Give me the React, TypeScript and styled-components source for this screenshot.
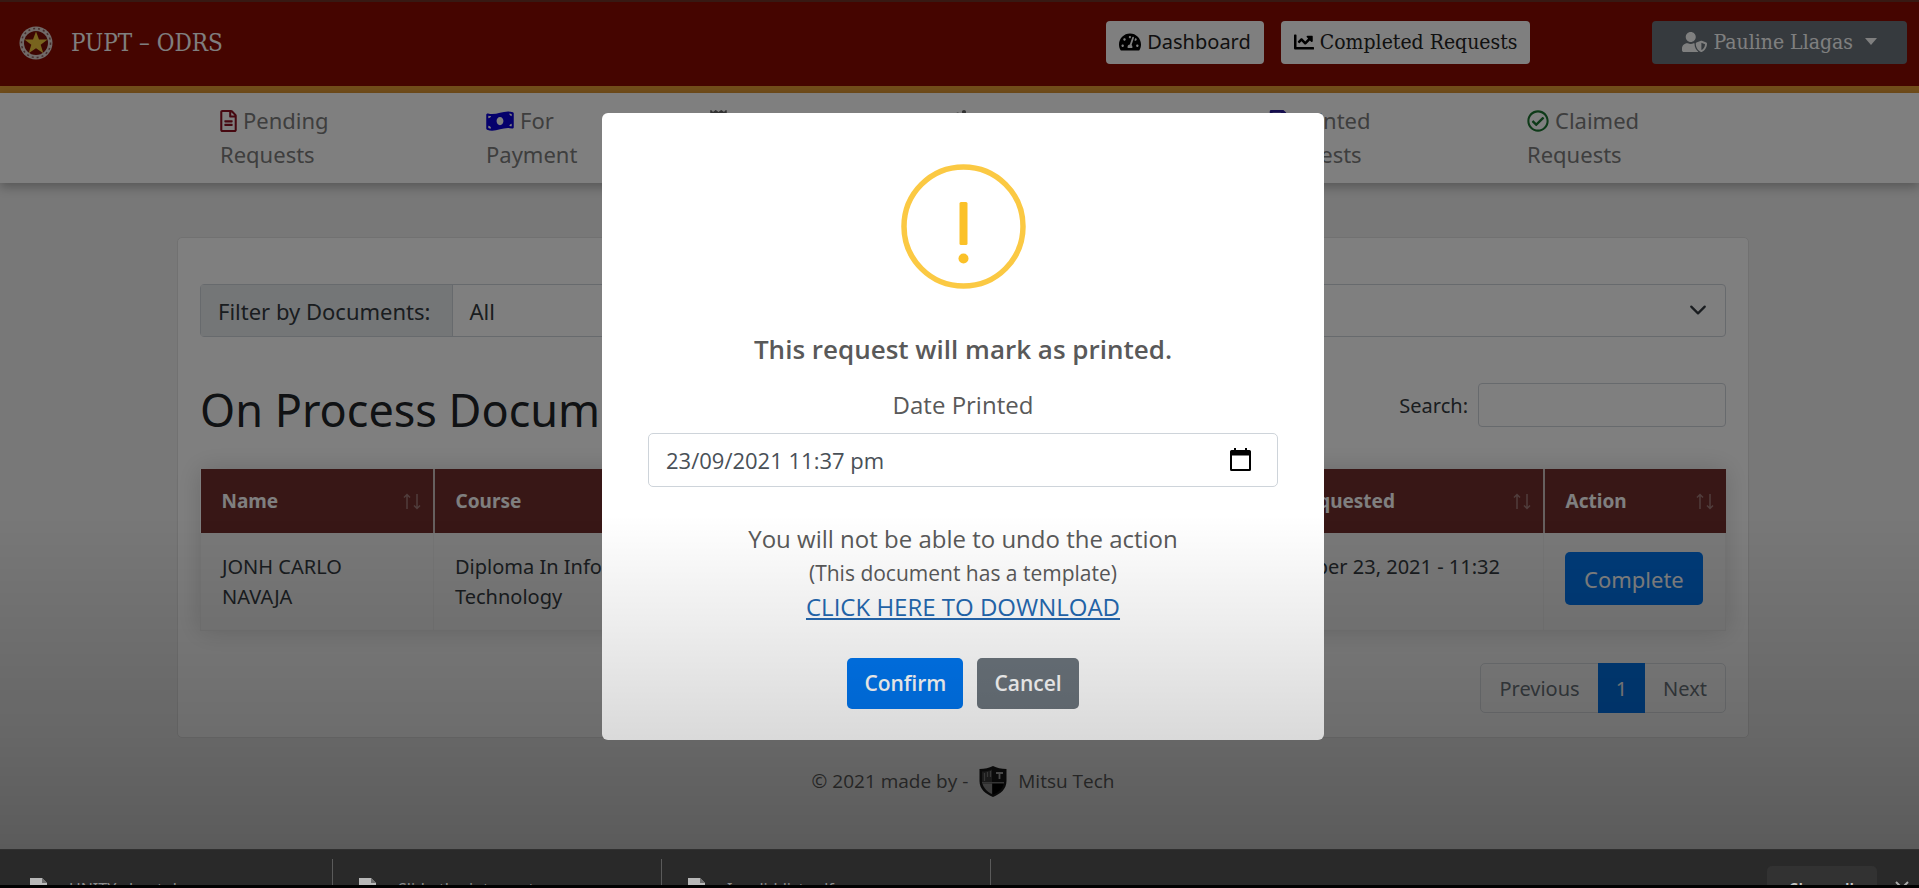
import React from 'react';
import styled, { createGlobalStyle, css } from 'styled-components';
import {
  FaTachometerAlt,
  FaChartLine,
  FaUserShield,
  FaRegFileAlt,
  FaMoneyBillWave,
  FaRegCheckCircle,
  FaPrint,
  FaReceipt,
  FaSpinner,
} from 'react-icons/fa';

const sans = '"Noto Sans", "Open Sans", sans-serif';
const dialogSans = '"Open Sans", "Noto Sans", sans-serif';
const serif = '"DejaVu Serif Condensed", "DejaVu Serif", serif';
const primary = '#0076f0';
const secondary = '#6c757d';

const GlobalStyle = createGlobalStyle`
  *, *::before, *::after { box-sizing: border-box; }
  body {
    margin: 0;
    background: #f0f0f0;
    color: #343a40;
    font-family: ${sans};
    font-size: 20px;
  }
  button, input, select { font-family: inherit; }
`;

const Page = styled.div`
  min-height: 100vh;
  padding-bottom: 39px;
`;

/* ---------- header ---------- */

const Header = styled.header`
  display: flex;
  align-items: center;
  padding: 19px 12px 22px 19px;
  background: #8a0a00;
  border-top: 2px solid #6e3226;
  border-bottom: 7px solid #e39c36;
`;

const Brand = styled.a`
  display: flex;
  align-items: center;
  gap: 18px;
  margin-right: auto;
  color: #fff;
  font-family: ${serif};
  font-size: 24px;
  line-height: 28px;
  text-decoration: none;
`;

const HeaderButton = styled.button<{ $icon: number; $serif?: boolean; $dark?: boolean }>`
  display: flex;
  align-items: center;
  justify-content: center;
  gap: 6px;
  height: 43px;
  padding: 0 13px 2px;
  border: 0;
  border-radius: 4px;
  background: #fff;
  color: #222;
  font-size: 20px;
  line-height: 28px;

  svg {
    height: 20px;
    width: ${(p) => p.$icon}px;
    color: ${(p) => (p.$dark ? '#fff' : '#000')};
  }

  ${(p) =>
    p.$serif &&
    css`
      font-family: ${serif};
      font-size: 21px;
    `}

  ${(p) =>
    p.$dark &&
    css`
      padding: 0 30px 2px;
      background: ${secondary};
      color: #fff;
    `}
`;

const HeaderActions = styled.div`
  display: flex;
  gap: 17px;
  margin-right: 122px;
`;

const Caret = styled.span`
  margin-left: 6px;
  border: 6px solid transparent;
  border-top: 7px solid currentColor;
  border-bottom: 0;
`;

/* ---------- status navigation ---------- */

const StatusNav = styled.nav`
  display: grid;
  grid-template-columns: 266fr 224fr 243fr 314fr 260fr 392fr;
  padding: 10px 0 12px 220px;
  background: #fff;
  box-shadow: 0 4px 10px rgba(0, 0, 0, 0.28);
`;

const StatusLink = styled.a<{ $tint: string; $icon: number }>`
  color: #7c7c7c;
  font-size: 22px;
  line-height: 34px;
  text-decoration: none;

  svg {
    height: 22px;
    width: ${(p) => p.$icon}px;
    margin-right: 6px;
    vertical-align: -3px;
    color: ${(p) => p.$tint};
  }
`;

/* ---------- main card ---------- */

const Main = styled.main`
  padding: 54px 170px 0 177px;
`;

const Card = styled.section`
  padding: 46px 22px 24px;
  background: #fff;
  border: 1px solid #e2e2e2;
  border-radius: 5px;
`;

const FilterGroup = styled.div`
  display: flex;
  height: 53px;
  border: 1px solid #ced4da;
  border-radius: 4px;
`;

const FilterLabel = styled.label`
  display: flex;
  align-items: center;
  padding: 0 22px 0 17px;
  background: #e9ecef;
  border-right: 1px solid #ced4da;
  font-size: 22px;
`;

const SelectWrap = styled.div`
  position: relative;
  flex: 1;

  svg {
    position: absolute;
    top: 16px;
    right: 18px;
    pointer-events: none;
  }
`;

const Select = styled.select`
  width: 100%;
  height: 100%;
  padding: 0 48px 0 16px;
  appearance: none;
  border: 0;
  background: transparent;
  color: #343a40;
  font-size: 22px;
`;

const CardHead = styled.div`
  display: flex;
  align-items: flex-start;
  justify-content: space-between;
  margin: 46px 0 32px;
`;

const Heading = styled.h1`
  margin: 0;
  color: #212529;
  font-size: 45px;
  font-weight: 400;
  line-height: 54px;
`;

const SearchLabel = styled.label`
  display: flex;
  align-items: center;
  gap: 10px;
`;

const SearchInput = styled.input`
  width: 248px;
  height: 44px;
  padding: 0 12px;
  border: 1px solid #ced4da;
  border-radius: 4px;
  background: #fff;
  font-size: 20px;
`;

const Table = styled.table`
  width: 100%;
  table-layout: fixed;
  border-collapse: collapse;
  box-shadow: 0 0 24px rgba(0, 0, 0, 0.16);
`;

const Col = styled.col<{ $w?: string }>`
  width: ${(p) => p.$w ?? 'auto'};
`;

const Th = styled.th`
  height: 64px;
  padding: 0 12px 0 21px;
  background: #702e2c;
  color: #fff;
  font-size: 19px;
  font-weight: 700;
  text-align: left;

  & + & {
    border-left: 2px solid #cfc0be;
  }
`;

const ThInner = styled.div`
  display: flex;
  align-items: center;
  justify-content: space-between;
`;

const Td = styled.td`
  padding: 19px 21px 18px;
  background: #f2f2f2;
  border: 1px solid #eaeaea;
  border-top: 0;
  line-height: 30px;
  vertical-align: top;
`;

const CompleteButton = styled.button`
  display: block;
  height: 53px;
  padding: 0 19px;
  border: 0;
  border-radius: 5px;
  background: ${primary};
  color: #fff;
  font-size: 22px;
`;

const Pagination = styled.nav`
  display: flex;
  width: fit-content;
  height: 50px;
  margin: 32px 0 0 auto;
  border: 1px solid #dee2e6;
  border-radius: 5px;
`;

const PageButton = styled.button<{ $active?: boolean }>`
  margin: ${(p) => (p.$active ? '-1px 0' : '0')};
  padding: 0 18px;
  border: 0;
  background: ${(p) => (p.$active ? primary : 'transparent')};
  color: ${(p) => (p.$active ? '#fff' : secondary)};
  font-size: 20px;
`;

const Footer = styled.footer`
  display: flex;
  align-items: center;
  justify-content: center;
  gap: 11px;
  padding: 27px 0 27px 7px;
  color: #5c5c5c;
  font-family: ${dialogSans};
  font-size: 19px;
  line-height: 32px;
`;

/* ---------- dialog ---------- */

const Backdrop = styled.div`
  position: fixed;
  inset: 0;
  z-index: 10;
  display: flex;
  align-items: center;
  justify-content: center;
  padding: 0 0 36px 7px;
  background: rgba(0, 0, 0, 0.5);
`;

const Dialog = styled.div`
  display: flex;
  flex-direction: column;
  align-items: center;
  width: 722px;
  max-width: 100%;
  padding: 51px 46px 31px;
  background: #fff;
  border-radius: 6px;
  color: #595959;
  font-family: ${dialogSans};
`;

const DialogTitle = styled.h2`
  margin: 40px 0 18px;
  font-size: 26px;
  font-weight: 600;
  line-height: 40px;
`;

const DialogLabel = styled.label`
  font-size: 24px;
  line-height: 36px;
`;

const DateField = styled.div`
  display: flex;
  align-items: center;
  width: 100%;
  height: 54px;
  margin: 10px 0 34px;
  padding: 0 24px 0 17px;
  border: 1px solid #ced4da;
  border-radius: 5px;
`;

const DateInput = styled.input`
  flex: 1;
  min-width: 0;
  padding: 0;
  border: 0;
  outline: 0;
  background: transparent;
  color: #495057;
  font-size: 22px;
`;

const IconButton = styled.button`
  display: flex;
  padding: 0;
  border: 0;
  background: transparent;
  color: #000;
`;

const DialogText = styled.p<{ $small?: boolean }>`
  margin: 0;
  font-size: ${(p) => (p.$small ? '21px' : '24px')};
  line-height: ${(p) => (p.$small ? '32px' : '36px')};
`;

const DownloadLink = styled.a`
  color: #2468b0;
  text-decoration: underline;
`;

const DialogActions = styled.div`
  display: flex;
  gap: 14px;
  margin-top: 33px;
`;

const DialogButton = styled.button<{ $tone: string }>`
  height: 51px;
  padding: 0 17px;
  border: 0;
  border-radius: 5px;
  background: ${(p) => p.$tone};
  color: #fff;
  font-size: 21px;
  font-weight: 600;
`;

/* ---------- bottom shade and download shelf ---------- */

const Shade = styled.div`
  position: fixed;
  inset: 0;
  z-index: 20;
  pointer-events: none;
  background: linear-gradient(
    rgba(0, 0, 0, 0) 58%,
    rgba(0, 0, 0, 0.145) 83%,
    rgba(0, 0, 0, 0.24) 96%
  );
`;

const Shelf = styled.aside`
  position: fixed;
  inset: auto 0 0;
  z-index: 30;
  display: flex;
  height: 39px;
  padding-left: 4px;
  overflow: hidden;
  background: #292929;
  border-bottom: 3px solid #000;
  border-top: 1px solid #303030;
  color: #8c8c8c;
  font-size: 16px;
  line-height: 22px;
`;

const ShelfItem = styled.div`
  display: flex;
  gap: 22px;
  flex: 0 0 329px;
  height: 60px;
  margin-top: 9px;
  padding: 19px 0 0 26px;
  border-right: 1px solid #5a5a5a;
`;

const ShelfButton = styled.button`
  height: 44px;
  margin: 16px 18px 0 auto;
  padding: 12px 23px;
  border: 0;
  border-radius: 5px;
  background: #323232;
  color: #c4c4c4;
  font-size: 16px;
  font-weight: 600;
  line-height: 22px;
`;

const ShelfClose = styled.button`
  align-self: flex-start;
  margin: 31px 10px 0 0;
  padding: 0;
  border: 0;
  background: transparent;
  color: #aaa;
`;

/* ---------- drawings ---------- */

const Seal = () => (
  <svg width="34" height="34" viewBox="0 0 34 34" aria-hidden="true">
    <circle cx="17" cy="17" r="16.5" fill="#e2d4d0" />
    <circle cx="17" cy="17" r="14.500" fill="none" stroke="#8c5a58" strokeWidth="1.500" strokeDasharray="2 3" />
    <circle cx="17" cy="17" r="12" fill="#7a0c04" />
    <path
      d="M17 5.500l3 8h8.600l-6.900 5.300 2.600 8.400-7.300-5-7.300 5 2.600-8.400L5.400 13.500H14z"
      fill="#f0c83c"
    />
  </svg>
);

const Shield = () => (
  <svg width="28" height="31" viewBox="0 0 28 31" aria-hidden="true">
    <path d="M14 0c4 2 8 3 13.500 3v12c0 8-6 13-13.500 16C6.500 28 .500 23 .500 15V3C6 3 10 2 14 0z" fill="#1a1a1a" />
    <path d="M14 17.500h10.500C24 22.500 19.500 26.500 14 28.500z" fill="#000" />
    <path d="M13 17.500H3.500C4.500 22 8.500 26 13 28z" fill="#9a9a9a" />
    <path d="M3 5.500c4 0 7-.500 10-2v12.500H3z" fill="#444" />
    <path d="M3 16.800h22" stroke="#b0b0b0" strokeWidth="1" />
    <path d="M5.500 7v8M8.500 6v5M11.500 5v6" stroke="#888" strokeWidth="1.200" />
    <path d="M17 7h7M20.500 7v6" stroke="#b0b0b0" strokeWidth="1.800" />
  </svg>
);

const Warning = () => (
  <svg width="125" height="125" viewBox="0 0 125 125" role="img" aria-label="Warning">
    <circle cx="62.500" cy="62.500" r="59.500" fill="none" stroke="#fbc943" strokeWidth="5.500" />
    <rect x="58.500" y="38" width="8" height="43" rx="1.500" fill="#fbc128" />
    <circle cx="62.500" cy="94.500" r="5" fill="#fbc128" />
  </svg>
);

const Chevron = () => (
  <svg width="18" height="18" viewBox="0 0 16 16" aria-hidden="true">
    <path d="M2 5l6 6 6-6" fill="none" stroke="#343a40" strokeWidth="2" strokeLinecap="round" strokeLinejoin="round" />
  </svg>
);

const CalendarIcon = () => (
  <svg width="24" height="24" viewBox="0 0 24 24" aria-hidden="true">
    <path d="M5 0h2v2h9V0h2v2h2.500a1.500 1.500 0 0 1 1.500 1.500v18a1.500 1.500 0 0 1-1.500 1.500h-18A1.500 1.500 0 0 1 1 21.500v-18A1.500 1.500 0 0 1 2.500 2H5zM3 7.500V21h17V7.500z" fill="currentColor" fillRule="evenodd" />
  </svg>
);

const SortIcon = () => (
  <svg width="18" height="17" viewBox="0 0 18 17" fill="none" stroke="#a07a78" strokeWidth="1.500" aria-hidden="true">
    <path d="M4 16V1.500M1 4.500l3-3 3 3M14 1v14.500M11 12.500l3 3 3-3" />
  </svg>
);

const FileIcon = () => (
  <svg width="17" height="20" viewBox="0 0 17 20" aria-hidden="true">
    <path d="M0 0h12l5 5v15H0z" fill="#b8b8b8" />
    <path d="M12 0v5h5z" fill="#6e6e6e" />
  </svg>
);

/* ---------- page ---------- */

const statuses = [
  { icon: FaRegFileAlt, size: 17, tint: '#8c1020', first: 'Pending', second: 'Requests' },
  { icon: FaMoneyBillWave, size: 28, tint: '#0a00d8', first: 'For', second: 'Payment' },
  { icon: FaReceipt, size: 17, tint: '#666', first: 'For', second: 'Clearance' },
  { icon: FaSpinner, size: 22, tint: '#666', first: 'On', second: 'Process' },
  { icon: FaPrint, size: 22, tint: '#2a1a9c', first: 'Printed', second: 'Requests' },
  { icon: FaRegCheckCircle, size: 22, tint: '#1c7430', first: 'Claimed', second: 'Requests' },
];

const columns = ['Name', 'Course', 'Document', 'Date Requested', 'Action'];

const downloads = ['UNITY-sheet.docx', 'Slide-the-intro.pptx', 'Invalid-list.pdf'];

export default function App() {
  return (
    <>
      <GlobalStyle />
      <Page>
        <Header>
          <Brand href="#">
            <Seal />
            PUPT – ODRS
          </Brand>
          <HeaderActions>
            <HeaderButton type="button" $icon={22}>
              <FaTachometerAlt />
              Dashboard
            </HeaderButton>
            <HeaderButton type="button" $icon={20} $serif>
              <FaChartLine />
              Completed Requests
            </HeaderButton>
          </HeaderActions>
          <HeaderButton type="button" $icon={25} $serif $dark>
            <FaUserShield />
            Pauline Llagas
            <Caret />
          </HeaderButton>
        </Header>

        <StatusNav>
          {statuses.map(({ icon: Icon, size, tint, first, second }) => (
            <StatusLink key={first + second} href="#" $tint={tint} $icon={size}>
              <Icon />
              {first}
              <br />
              {second}
            </StatusLink>
          ))}
        </StatusNav>

        <Main>
          <Card>
            <FilterGroup>
              <FilterLabel htmlFor="document-filter">Filter by Documents:</FilterLabel>
              <SelectWrap>
                <Select id="document-filter" defaultValue="All">
                  <option>All</option>
                </Select>
                <Chevron />
              </SelectWrap>
            </FilterGroup>

            <CardHead>
              <Heading>On Process Documents</Heading>
              <SearchLabel>
                Search:
                <SearchInput type="search" />
              </SearchLabel>
            </CardHead>

            <Table>
              <colgroup>
                <Col $w="233px" />
                <Col $w="280px" />
                <Col />
                <Col $w="321px" />
                <Col $w="182px" />
              </colgroup>
              <thead>
                <tr>
                  {columns.map((name) => (
                    <Th key={name} scope="col">
                      <ThInner>
                        {name}
                        <SortIcon />
                      </ThInner>
                    </Th>
                  ))}
                </tr>
              </thead>
              <tbody>
                <tr>
                  <Td>JONH CARLO NAVAJA</Td>
                  <Td>Diploma In Information Technology</Td>
                  <Td>Certificate</Td>
                  <Td>September 23, 2021 - 11:32 PM</Td>
                  <Td>
                    <CompleteButton type="button">Complete</CompleteButton>
                  </Td>
                </tr>
              </tbody>
            </Table>

            <Pagination aria-label="Table pages">
              <PageButton type="button">Previous</PageButton>
              <PageButton type="button" $active>
                1
              </PageButton>
              <PageButton type="button">Next</PageButton>
            </Pagination>
          </Card>
        </Main>

        <Footer>
          <span>© 2021 made by -</span>
          <Shield />
          <span>Mitsu Tech</span>
        </Footer>
      </Page>

      <Backdrop>
        <Dialog role="dialog" aria-modal="true" aria-labelledby="dialog-title">
          <Warning />
          <DialogTitle id="dialog-title">This request will mark as printed.</DialogTitle>
          <DialogLabel htmlFor="date-printed">Date Printed</DialogLabel>
          <DateField>
            <DateInput id="date-printed" type="text" defaultValue="23/09/2021 11:37 pm" />
            <IconButton type="button" aria-label="Pick a date">
              <CalendarIcon />
            </IconButton>
          </DateField>
          <DialogText>You will not be able to undo the action</DialogText>
          <DialogText $small>(This document has a template)</DialogText>
          <DialogText>
            <DownloadLink href="#">CLICK HERE TO DOWNLOAD</DownloadLink>
          </DialogText>
          <DialogActions>
            <DialogButton type="button" $tone={primary}>
              Confirm
            </DialogButton>
            <DialogButton type="button" $tone={secondary}>
              Cancel
            </DialogButton>
          </DialogActions>
        </Dialog>
      </Backdrop>

      <Shade />

      <Shelf aria-label="Downloads">
        {downloads.map((name) => (
          <ShelfItem key={name}>
            <FileIcon />
            <span>{name}</span>
          </ShelfItem>
        ))}
        <ShelfButton type="button">Show all</ShelfButton>
        <ShelfClose type="button" aria-label="Close downloads">
          <svg width="14" height="14" viewBox="0 0 14 14" stroke="currentColor" strokeWidth="2" aria-hidden="true">
            <path d="M1 1l12 12M13 1L1 13" />
          </svg>
        </ShelfClose>
      </Shelf>
    </>
  );
}
